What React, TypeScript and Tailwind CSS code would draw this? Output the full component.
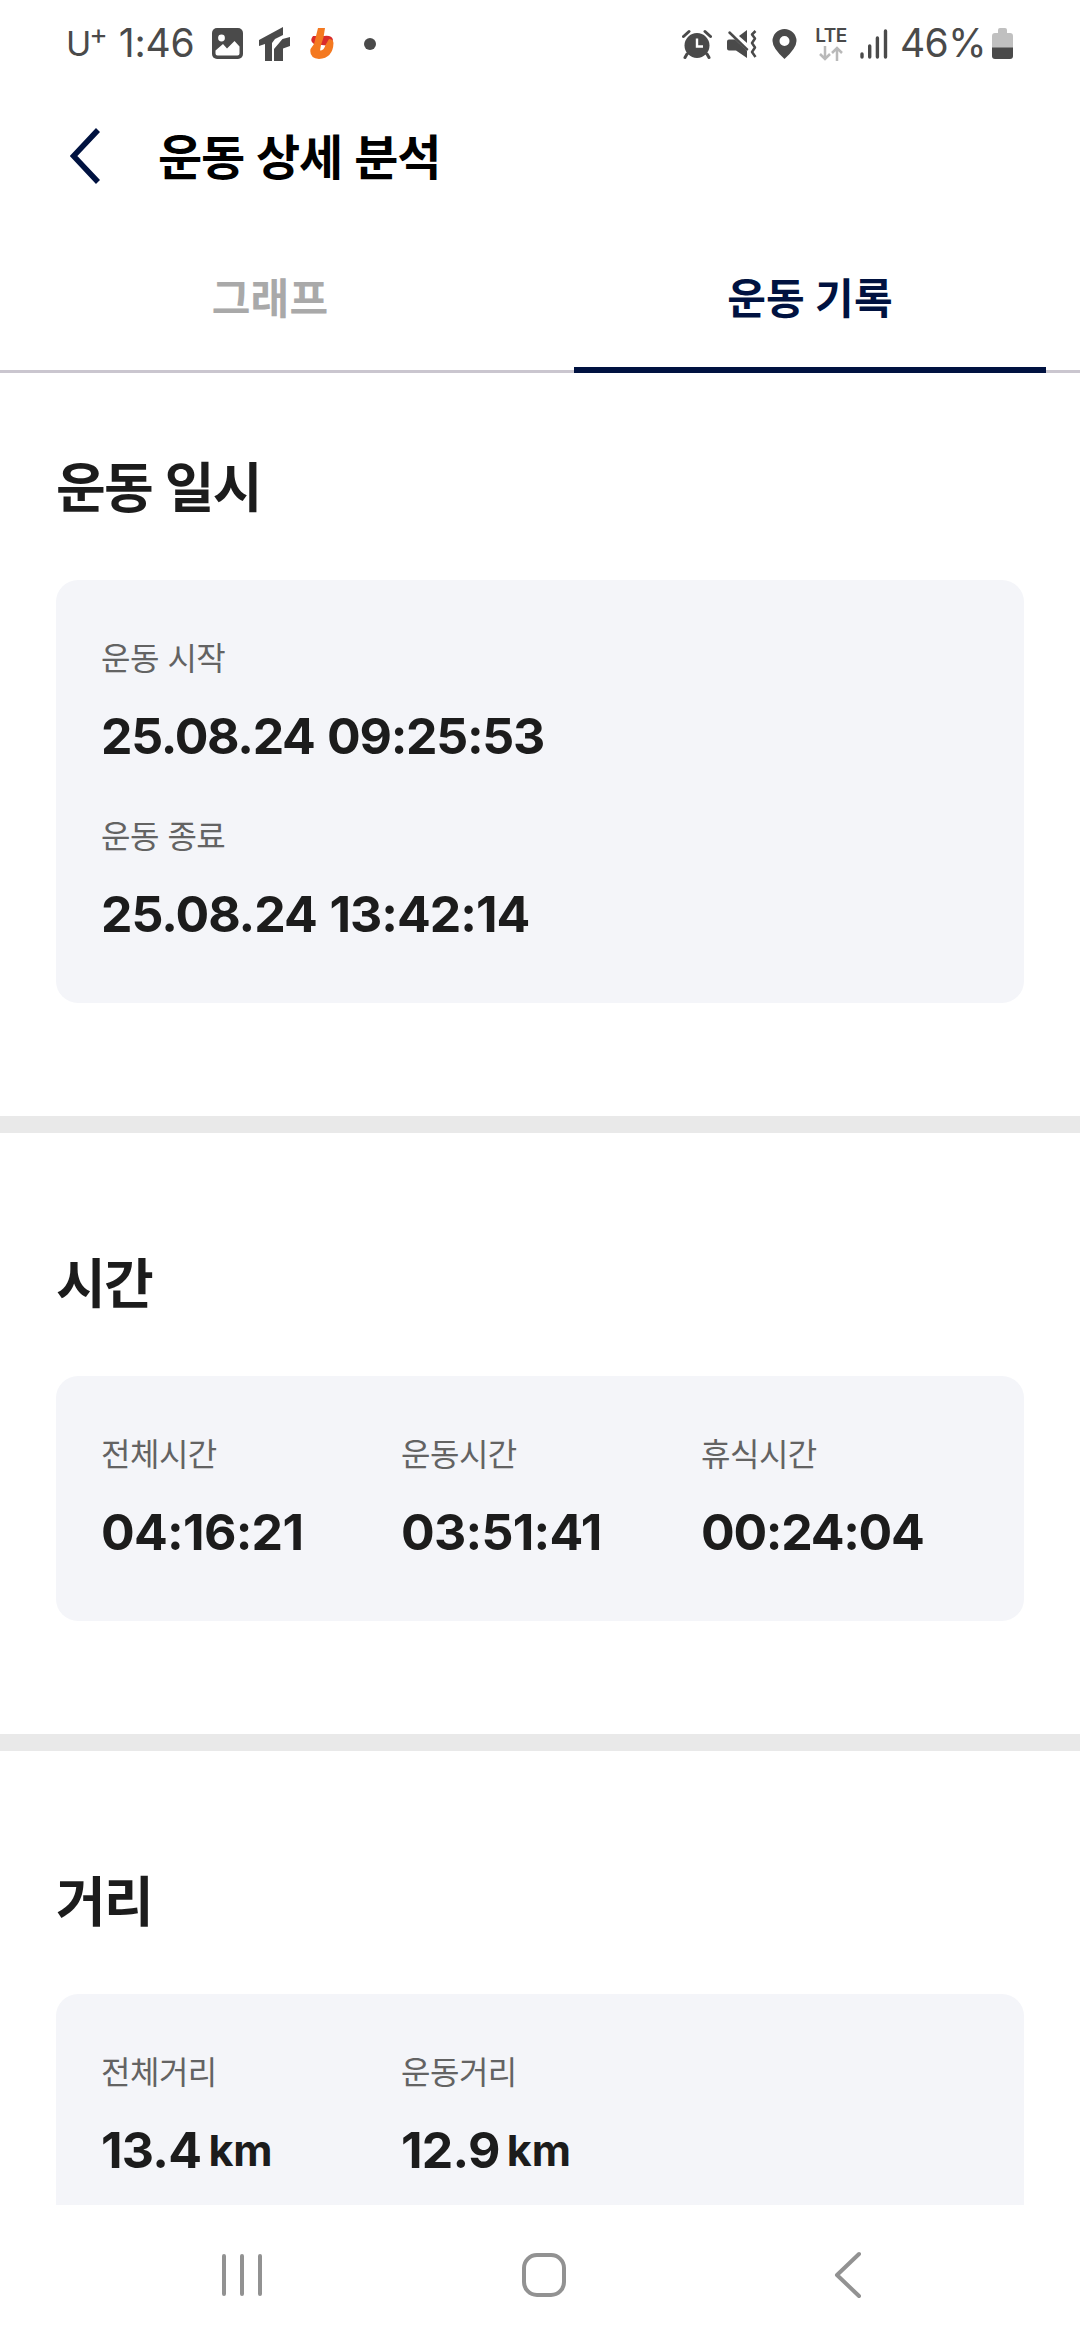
import type { ReactNode } from "react"

type Metric = { label: string; value: string; unit?: string }

const TIMES: Metric[] = [
  { label: "전체시간", value: "04:16:21" },
  { label: "운동시간", value: "03:51:41" },
  { label: "휴식시간", value: "00:24:04" },
]

const DISTANCES: Metric[] = [
  { label: "전체거리", value: "13.4", unit: "km" },
  { label: "운동거리", value: "12.9", unit: "km" },
]

export default function App() {
  return (
    <div className="flex flex-col w-[1080px] h-[2340px] overflow-hidden bg-white font-['Inter','Noto_Sans_CJK_KR',sans-serif] text-[#1c1c1c]">
      <StatusBar />
      <Header />
      <Tabs />

      <main className="flex-1 min-h-0 overflow-hidden">
        <Section title="운동 일시" className="pt-[76px]">
          <Card className="flex flex-col gap-10 h-[423px]">
            <MetricItem label="운동 시작" value="25.08.24 09:25:53" />
            <MetricItem label="운동 종료" value="25.08.24 13:42:14" />
          </Card>
        </Section>
        <Divider />
        <Section title="시간" className="pt-[112px]">
          <MetricRow items={TIMES} />
        </Section>
        <Divider />
        <Section title="거리" className="pt-[112px]">
          <MetricRow items={DISTANCES} />
        </Section>
      </main>

      <NavBar />
    </div>
  )
}

function Section({
  title,
  className,
  children,
}: {
  title: string
  className: string
  children: ReactNode
}) {
  return (
    <section className={`px-14 pb-[113px] ${className}`}>
      <h2 className="h-20 mb-[51px] text-[54px] leading-[80px] font-bold tracking-[-1.8px] [word-spacing:2px]">
        {title}
      </h2>
      {children}
    </section>
  )
}

function Card({ className, children }: { className: string; children: ReactNode }) {
  return (
    <div className={`rounded-[22px] bg-[#f4f5f9] pt-[55px] pl-[45px] ${className}`}>
      {children}
    </div>
  )
}

function MetricRow({ items }: { items: Metric[] }) {
  return (
    <Card className="flex h-[245px]">
      {items.map((item) => (
        <MetricItem key={item.label} {...item} />
      ))}
    </Card>
  )
}

// The digits sit tight, but a "1" is narrow and needs some room back
function tracking(value: string) {
  const ones = value.split("1").length - 1
  return -1.3 + (2.3 * ones) / value.length
}

function MetricItem({ label, value, unit }: Metric) {
  return (
    <div className="min-w-[300px]">
      <p className="h-12 text-[32px] leading-[48px] tracking-[-0.5px] text-[#636363]">
        {label}
      </p>
      <p className="flex items-baseline h-[72px] mt-[17px] mb-px text-[50px] leading-[72px] font-bold whitespace-nowrap [word-spacing:2px]">
        <span style={{ letterSpacing: tracking(value) }}>{value}</span>
        {unit && <span className="relative -top-0.5 ml-[7px] text-[43px] leading-none">{unit}</span>}
      </p>
    </div>
  )
}

function Divider() {
  return <div className="h-[17px] bg-[#e9e9e9]" />
}

function Header() {
  return (
    <header className="flex items-center h-[138px] pl-[70px]">
      <svg className="w-[32px] h-[56px]" viewBox="0 0 32 56" fill="none">
        <path d="M28 2 L3.5 28 L28 54" stroke="#001240" strokeWidth="5.5" />
      </svg>
      <h1 className="ml-[56px] mt-[3px] text-[48px] leading-[70px] font-bold tracking-[-1.2px] [word-spacing:2px] text-black">
        운동 상세 분석
      </h1>
    </header>
  )
}

function Tabs() {
  return (
    <div className="relative flex h-[148px] shrink-0 border-b-[3px] border-[#cac6cf] text-[42px] leading-[62px] font-bold text-center tracking-[0.2px]">
      <button className="w-[540px] pt-0.5 text-[#a9a9a9]">그래프</button>
      <button className="w-[540px] pt-0.5 text-[#001240]">운동 기록</button>
      <span className="absolute left-[574px] -bottom-[3px] w-[472px] h-1.5 bg-[#001240]" />
    </div>
  )
}

function StatusBar() {
  return (
    <div className="flex items-center h-[87px] shrink-0 pl-[66px] pr-[67px] text-[#4a4a4a]">
      <div className="flex items-center">
        <span className="text-[34px] leading-none">U</span>
        <span className="-mt-5 -ml-0.5 text-[28px] leading-none">+</span>
        <span className="w-[76px] ml-[11px] -mt-0.5 text-[39px] leading-none tracking-[-0.2px]">1:46</span>
        <svg className="ml-[17px] w-[31px] h-[31px]" viewBox="0 0 31 31">
          <rect width="31" height="31" rx="5" fill="#4a4a4a" />
          <circle cx="9.5" cy="10" r="3.4" fill="#fff" />
          <path d="M3.5 22.5 L11 16 L15 20.5 L22.5 13 L27.5 18.5 V25.5 Q27.5 27.5 25.5 27.5 H5.5 Q3.5 27.5 3.5 25.5 Z" fill="#fff" />
        </svg>
        <svg className="ml-4 w-[32px] h-[34px]" viewBox="0 0 32 34">
          <path d="M0 13 L24 0 V8 L16 12 L13 16 V34 H6 V17 L0 19 Z" fill="#4a4a4a" />
          <path d="M31 10 V19 L24 21.5 V34 H15 V22 L23.5 12 Z" fill="#4a4a4a" />
        </svg>
        <svg className="ml-[19px] w-[24px] h-[31px]" viewBox="0 0 24 31">
          <path d="M3 8 H14 Q22 7 23 12 L20 18 L4 16 Q-1 13 3 8 Z" fill="#d92b2b" />
          <path d="M8 0 H15 L13.5 9.5 L11 17 L10 22.5 Q14 22.5 15.5 17 L19 11 Q23 11 23.5 15 Q23 30 9 31 Q-1 30 0.5 21 L4 16 Z" fill="#f47920" />
        </svg>
        <span className="ml-[30px] w-3 h-3 rounded-full bg-[#4a4a4a]" />
      </div>

      <div className="flex items-center ml-auto">
        <svg className="w-[30px] h-[30px]" viewBox="0 0 30 30">
          <circle cx="15" cy="16.5" r="12.5" fill="#4a4a4a" />
          <path d="M1.5 7.5 L7 2.5 M28.5 7.5 L23 2.5 M5 25 L3 28.5 M25 25 L27 28.5" stroke="#4a4a4a" strokeWidth="3" strokeLinecap="round" />
          <path d="M15 9.5 V17.5 H21" stroke="#fff" strokeWidth="2.4" fill="none" />
        </svg>
        <svg className="ml-[15px] w-[30px] h-[30px]" viewBox="0 0 30 30">
          <path d="M12 7 L20 1 V14 Z" fill="#4a4a4a" />
          <path d="M0 12.5 Q0 10.5 2 10.5 H8 L20 22 V29 L9 21.5 H2 Q0 21.5 0 19.5 Z" fill="#4a4a4a" />
          <path d="M2.5 3.5 L20 20.5" stroke="#4a4a4a" strokeWidth="2.5" strokeLinecap="round" />
          <path d="M28.5 2 L25 5.5 L28 9.5 L25 14 L28 18.5 L25 23 L28.5 28" stroke="#4a4a4a" strokeWidth="2.5" fill="none" strokeLinejoin="round" />
        </svg>
        <svg className="ml-[15px] w-[25px] h-[30px]" viewBox="0 0 25 30">
          <path d="M12.5 0 A12 12 0 0 1 24.5 12 Q24.5 19 12.5 30 Q0.5 19 0.5 12 A12 12 0 0 1 12.5 0 Z M12.5 7 A5 5 0 1 0 12.5 17 A5 5 0 1 0 12.5 7 Z" fill="#4a4a4a" fillRule="evenodd" />
        </svg>
        <div className="flex flex-col items-center ml-[17px] w-[34px] pt-0.5">
          <span className="text-[19px] leading-[16px] font-semibold tracking-[-0.5px]">LTE</span>
          <svg className="mt-0.5 w-[24px] h-[15px]" viewBox="0 0 24 15" fill="none" stroke="#b9b9b9" strokeWidth="2.5">
            <path d="M6 0 V13 M1 8 L6 13 L11 8" />
            <path d="M18 15 V2 M13 7 L18 2 L23 7" />
          </svg>
        </div>
        <svg className="ml-[12px] w-[28px] h-[30px]" viewBox="0 0 28 30" stroke="#4a4a4a" strokeWidth="3.4" strokeLinecap="round">
          <path d="M2 25 V28 M9.7 17 V28 M17.4 9 V28 M25.5 2 V28" />
        </svg>
        <span className="w-[85px] ml-[12px] -mt-0.5 text-[39px] leading-none tracking-[-0.6px]">46%</span>
        <svg className="ml-[7px] w-[21px] h-[32px]" viewBox="0 0 21 32">
          <path d="M6 2 Q6 0 8 0 H13 Q15 0 15 2 V5 H18 Q21 5 21 8 V20 H0 V8 Q0 5 3 5 H6 Z" fill="#c0c0c0" />
          <path d="M0 19.5 H21 V28 Q21 31 18 31 H3 Q0 31 0 28 Z" fill="#4a4a4a" />
        </svg>
      </div>
    </div>
  )
}

function NavBar() {
  return (
    <nav className="flex items-center h-[135px] shrink-0 bg-white pl-[221px] pt-1">
      <svg className="w-[42px] h-[46px]" viewBox="0 0 42 46" stroke="#929292" strokeWidth="4" strokeLinecap="round">
        <path d="M3 4 V42 M21 4 V42 M39 4 V42" />
      </svg>
      <svg className="ml-[258px] w-[46px] h-[46px]" viewBox="0 0 46 46" fill="none" stroke="#929292" strokeWidth="4">
        <rect x="3" y="3" width="40" height="40" rx="13" />
      </svg>
      <svg className="ml-[266px] w-[29px] h-[48px]" viewBox="0 0 29 48" fill="none" stroke="#929292" strokeWidth="4" strokeLinecap="round" strokeLinejoin="round">
        <path d="M26 3 L4 24 L26 45" />
      </svg>
    </nav>
  )
}
